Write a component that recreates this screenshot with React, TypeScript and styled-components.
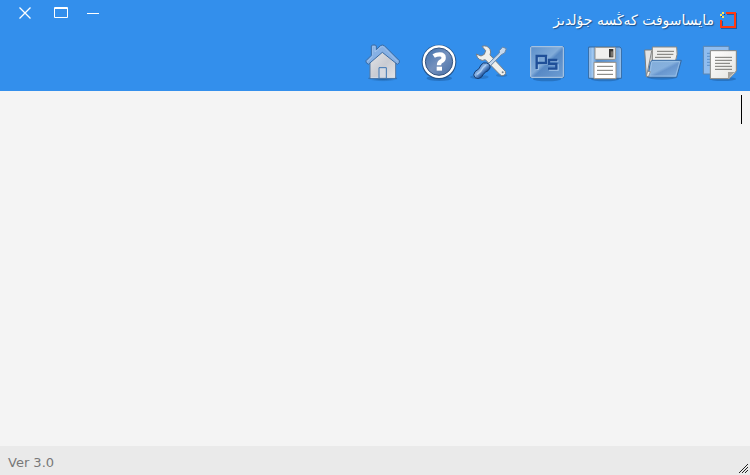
import React from "react";
import styled, { createGlobalStyle } from "styled-components";

const GlobalStyle = createGlobalStyle`
  html, body, #root { height: 100%; }
  body { margin: 0; }
  * { box-sizing: border-box; }
`;

const Window = styled.main`
  min-height: 100%;
  display: flex;
  flex-direction: column;
  background: #f4f4f4;
  font-family: "DejaVu Sans", Verdana, sans-serif;
`;

const Header = styled.header`
  background: #338fec;
`;

const TitleBar = styled.div`
  display: flex;
  justify-content: space-between;
  align-items: flex-start;
  height: 35px;
  padding: 0 12px 0 7px;
`;

const WindowControls = styled.div`
  display: flex;
`;

const ControlButton = styled.button`
  width: 36px;
  height: 26px;
  padding: 0;
  border: 0;
  background: transparent;
  svg { display: block; }
`;

const Title = styled.h1`
  display: flex;
  align-items: center;
  gap: 5px;
  height: 40px;
  margin: 0;
  direction: rtl;
  color: #fff;
  font-family: "DejaVu Sans", sans-serif;
  font-size: 14px;
  font-weight: 400;
  text-shadow: 1px 1px 1px #1d4f86;
  white-space: nowrap;
`;

const Toolbar = styled.nav`
  display: flex;
  justify-content: flex-end;
`;

const ToolButton = styled.button`
  width: 57px;
  height: 56px;
  padding: 0;
  border: 0;
  background: transparent;
  svg { display: block; width: 100%; height: 100%; }
`;

const Editor = styled.div`
  position: relative;
  flex: 1;
  display: flex;
`;

const TextArea = styled.textarea`
  flex: 1;
  padding: 4px 8px;
  border: 0;
  outline: 0;
  resize: none;
  background: transparent;
  caret-color: transparent;
  font: 20px/29px "DejaVu Sans", sans-serif;
`;

const Caret = styled.span`
  position: absolute;
  top: 4px;
  right: 8px;
  width: 1px;
  height: 29px;
  background: #000;
`;

const StatusBar = styled.footer`
  display: flex;
  justify-content: space-between;
  align-items: flex-end;
  height: 29px;
  padding-left: 8px;
  background: #eaeaea;
  color: #787878;
  font-size: 13px;
  line-height: 24px;
  svg { display: block; }
`;

const HomeIcon = () => (
  <svg viewBox="-12 0 171 168" aria-hidden="true">
    <defs>
      <linearGradient id="wall" x1="0" y1="0" x2="1" y2="1">
        <stop offset="0" stopColor="#e6e7ea" /><stop offset=".55" stopColor="#c9cbd2" /><stop offset="1" stopColor="#e4e5e8" />
      </linearGradient>
      <radialGradient id="shade"><stop offset="0" stopColor="#12406f" stopOpacity=".65" /><stop offset="1" stopColor="#12406f" stopOpacity="0" /></radialGradient>
    </defs>
    <ellipse cx="84" cy="131" rx="46" ry="9" fill="url(#shade)" />
    <path d="M45 78L82 44L122 78V130H45Z" fill="url(#wall)" stroke="#58789f" strokeWidth="3" />
    <path d="M47 128H120" stroke="#eef0f3" strokeWidth="3" />
    <path d="M72 129V98H94V129" fill="#d5d9e1" stroke="#3d75b3" strokeWidth="3" />
    <path d="M40 130H126" stroke="#2c66a5" strokeWidth="2" />
    <path d="M49 61V33L52 30H61L64 33V44L76 32Q82 28 88 32L133 77V83L127 88L82 52L40 88L33 82V77Z" fill="#86b0e4" stroke="#3a6ba3" strokeWidth="3" strokeLinejoin="round" />
    <path d="M53 61V35H60V51L78 36Q82 33 86 36L128 79M37 80L53 64" fill="none" stroke="#a9c8ee" strokeWidth="2" />
  </svg>
);

const HelpIcon = () => (
  <svg viewBox="-6 0 171 168" aria-hidden="true">
    <defs>
      <linearGradient id="disc" x1="0" y1="0" x2="1" y2="1">
        <stop offset="0" stopColor="#3c6fae" /><stop offset=".5" stopColor="#7591bd" /><stop offset="1" stopColor="#456ea6" />
      </linearGradient>
    </defs>
    <ellipse cx="88" cy="130" rx="38" ry="8" fill="#174c86" opacity=".4" />
    <circle cx="87" cy="81" r="52" fill="#24548b" />
    <circle cx="87" cy="80" r="49" fill="#fff" />
    <circle cx="87" cy="80" r="41" fill="url(#disc)" stroke="#36557f" strokeWidth="3" />
    <path d="M71 63Q79 58 89 58Q101 58 101 68Q101 75 93 79Q87 82 87 91" fill="none" stroke="#fff" strokeWidth="13" />
    <path d="M80 95H96V107H80Z" fill="#fff" />
  </svg>
);

const ToolsIcon = () => (
  <svg viewBox="9 0 171 168" aria-hidden="true">
    <defs>
      <linearGradient id="handle" x1="0" y1="0" x2="1" y2="1">
        <stop offset="0" stopColor="#2866b0" /><stop offset=".45" stopColor="#8db5e6" /><stop offset=".65" stopColor="#2559a0" /><stop offset="1" stopColor="#163e77" />
      </linearGradient>
    </defs>
    <ellipse cx="52" cy="126" rx="28" ry="6" fill="#174c86" opacity=".3" />
    <ellipse cx="119" cy="121" rx="17" ry="5" fill="#174c86" opacity=".3" />
    <path d="M60 34Q76 29 84 43Q88 51 84 60L130 109Q133 117 126 121Q119 125 113 118L70 74Q61 79 52 73Q44 68 43 57L57 63L67 58L71 47Z" fill="#eeefec" stroke="#777f87" strokeWidth="3" strokeLinejoin="round" />
    <circle cx="122" cy="112" r="3" fill="#77818b" />
    <path d="M79 86L112 54V47L122 36L133 41L128 54L118 59L86 92Z" fill="#c5d8ed" stroke="#6687aa" strokeWidth="3" strokeLinejoin="round" />
    <path d="M39 110Q53 103 57 90Q63 81 74 84Q86 88 84 99Q80 108 70 112Q63 117 58 127Q48 134 39 128Q31 120 39 110Z" fill="url(#handle)" stroke="#153b70" strokeWidth="3" />
    <path d="M45 118Q58 110 63 98L72 90" fill="none" stroke="#b0cff2" strokeWidth="4" />
  </svg>
);

const PsIcon = () => (
  <svg viewBox="12 0 171 168" aria-hidden="true">
    <defs>
      <linearGradient id="tile" x1="0" y1="0" x2="1" y2="1">
        <stop offset="0" stopColor="#5b8fca" /><stop offset=".46" stopColor="#82acd9" /><stop offset=".54" stopColor="#5789c5" /><stop offset="1" stopColor="#6d9dd2" />
      </linearGradient>
    </defs>
    <ellipse cx="87" cy="132" rx="42" ry="7" fill="#174c86" opacity=".4" />
    <rect x="36" y="33" width="103" height="97" rx="5" fill="#366da9" />
    <rect x="38" y="35" width="98" height="92" rx="3" fill="url(#tile)" stroke="#b8d0e9" strokeWidth="3" />
    <path d="M60 105V66H87V87H63M121 78H93V90H120V105H93" fill="none" stroke="#a5c8ec" strokeWidth="4" />
    <path d="M56 102V63H84V84H57M118 75H93V87H115V101H90" fill="none" stroke="#1f4f98" strokeWidth="7" />
  </svg>
);

const SaveIcon = () => (
  <svg viewBox="9 0 171 168" aria-hidden="true">
    <defs>
      <linearGradient id="disk" x1="0" y1="0" x2="1" y2="0">
        <stop offset="0" stopColor="#6da5df" /><stop offset=".12" stopColor="#a2c9f1" /><stop offset=".25" stopColor="#528bc8" /><stop offset=".8" stopColor="#699fda" /><stop offset="1" stopColor="#8ab8ea" />
      </linearGradient>
    </defs>
    <ellipse cx="87" cy="132" rx="42" ry="7" fill="#174c86" opacity=".4" />
    <path d="M38 36H132L136 41V130H38Z" fill="url(#disk)" stroke="#36699f" strokeWidth="3" />
    <path d="M41 39V127M133 43V127" stroke="#abcdf0" strokeWidth="2" />
    <rect x="57" y="37" width="61" height="36" rx="2" fill="#f0f0ef" stroke="#918e88" strokeWidth="3" />
    <rect x="99" y="42" width="13" height="25" fill="#343434" />
    <path d="M104 49H111V65H104Z" fill="#77736d" />
    <path d="M54 131V82H120V131Z" fill="#fff" stroke="#979087" strokeWidth="3" />
    <path d="M63 94H111M63 106H111M63 118H111" stroke="#777873" strokeWidth="3" />
  </svg>
);

const OpenIcon = () => (
  <svg viewBox="6 0 171 168" aria-hidden="true">
    <defs>
      <linearGradient id="folder" x1="0" y1="0" x2="1" y2="1">
        <stop offset="0" stopColor="#82add9" /><stop offset=".45" stopColor="#86b0dd" /><stop offset=".55" stopColor="#6896ce" /><stop offset="1" stopColor="#80aedf" />
      </linearGradient>
    </defs>
    <ellipse cx="84" cy="127" rx="44" ry="7" fill="#174c86" opacity=".4" />
    <path d="M32 45H55V73L42 125H37Z" fill="#e3e4e4" stroke="#777d81" strokeWidth="3" />
    <path d="M53 48L41 108L39 123" fill="none" stroke="#858585" strokeWidth="3" />
    <path d="M55 36H128Q132 60 125 76L114 91H55Z" fill="#eeeeec" stroke="#898783" strokeWidth="3" />
    <path d="M69 49H120M69 58H118M63 67H111" stroke="#777773" strokeWidth="3" />
    <path d="M54 76H142L128 127H41L49 82Z" fill="url(#folder)" stroke="#356aa4" strokeWidth="3" strokeLinejoin="round" />
    <path d="M54 80H137L125 123H47L53 82Z" fill="none" stroke="#a8caec" strokeWidth="2" />
    <path d="M41 109L37 124H44L49 110Z" fill="#f1f1ee" stroke="#777" strokeWidth="2" />
  </svg>
);

const NewIcon = () => (
  <svg viewBox="9 0 171 168" aria-hidden="true">
    <defs>
      <linearGradient id="paper" x1="0" y1="0" x2="1" y2="1">
        <stop offset="0" stopColor="#fff" /><stop offset="1" stopColor="#e4e4e0" />
      </linearGradient>
    </defs>
    <ellipse cx="98" cy="132" rx="40" ry="6" fill="#174c86" opacity=".4" />
    <path d="M40 34H117V117H40Z" fill="#90bdef" stroke="#5d86b0" strokeWidth="3" />
    <path d="M51 55H100M51 64H100M51 73H100M51 82H100M51 91H100" stroke="#5b91cd" strokeWidth="3" />
    <path d="M61 47H139V108L117 131H61Z" fill="url(#paper)" stroke="#898781" strokeWidth="3" />
    <path d="M75 67H126M75 76H126M75 85H120M75 94H126M75 103H126" stroke="#787874" strokeWidth="3" />
    <path d="M114 131V111H138L117 131Z" fill="#a5a39d" />
    <path d="M119 126L133 113" stroke="#d4d2cc" strokeWidth="3" />
  </svg>
);

const tools = [
  { label: "Home", Icon: HomeIcon },
  { label: "Help", Icon: HelpIcon },
  { label: "Settings", Icon: ToolsIcon },
  { label: "Ps", Icon: PsIcon },
  { label: "Save", Icon: SaveIcon },
  { label: "Open", Icon: OpenIcon },
  { label: "New", Icon: NewIcon },
];

const controls = [
  { label: "Close", drawing: <path d="M12.5 7.5L23.5 18.5M23.5 7.5L12.5 18.5" strokeWidth="1.3" /> },
  { label: "Maximize", drawing: <path d="M11.5 7.5H24.5V17.5H11.5ZM11 8.5H25" strokeWidth="1" /> },
  { label: "Minimize", drawing: <path d="M8 13.5H20" strokeWidth="1" /> },
];

export default function App() {
  return (
    <Window>
      <GlobalStyle />
      <Header>
        <TitleBar>
          <WindowControls>
            {controls.map(({ label, drawing }) => (
              <ControlButton key={label} type="button" aria-label={label}>
                <svg width="36" height="26" fill="none" stroke="#fff" aria-hidden="true">{drawing}</svg>
              </ControlButton>
            ))}
          </WindowControls>
          <Title>
            <svg width="19" height="19" viewBox="0 0 19 19" shapeRendering="crispEdges" aria-hidden="true">
              <path d="M8 3H17V17H3V10" fill="none" stroke="#1d5da8" strokeWidth="2" />
              <path d="M7 2H16V16H2V9" fill="none" stroke="#ff3a12" strokeWidth="2" />
              <path d="M3 1h2v2H3zM1 3h2v2H1zM3 5h2v2H3z" fill="#ffe45c" />
              <path d="M5 3h1v1H5zM2 5h1v1H2z" fill="#164e8f" />
            </svg>
            <span>مايساسوفت كەڭسە جۇلدىز</span>
          </Title>
        </TitleBar>
        <Toolbar>
          {tools.map(({ label, Icon }) => (
            <ToolButton key={label} type="button" aria-label={label}><Icon /></ToolButton>
          ))}
        </Toolbar>
      </Header>
      <Editor>
        <TextArea dir="rtl" aria-label="Document" />
        <Caret />
      </Editor>
      <StatusBar>
        <span>Ver 3.0</span>
        <svg width="13" height="13" viewBox="0 0 13 13" shapeRendering="crispEdges" aria-hidden="true">
          {[8, 5, 2].map((start) =>
            Array.from({ length: 11 - start }, (_, i) => (
              <rect key={`${start}-${i}`} x={start + i} y={10 - i} width="1" height="1" fill="#222" />
            ))
          )}
        </svg>
      </StatusBar>
    </Window>
  );
}
